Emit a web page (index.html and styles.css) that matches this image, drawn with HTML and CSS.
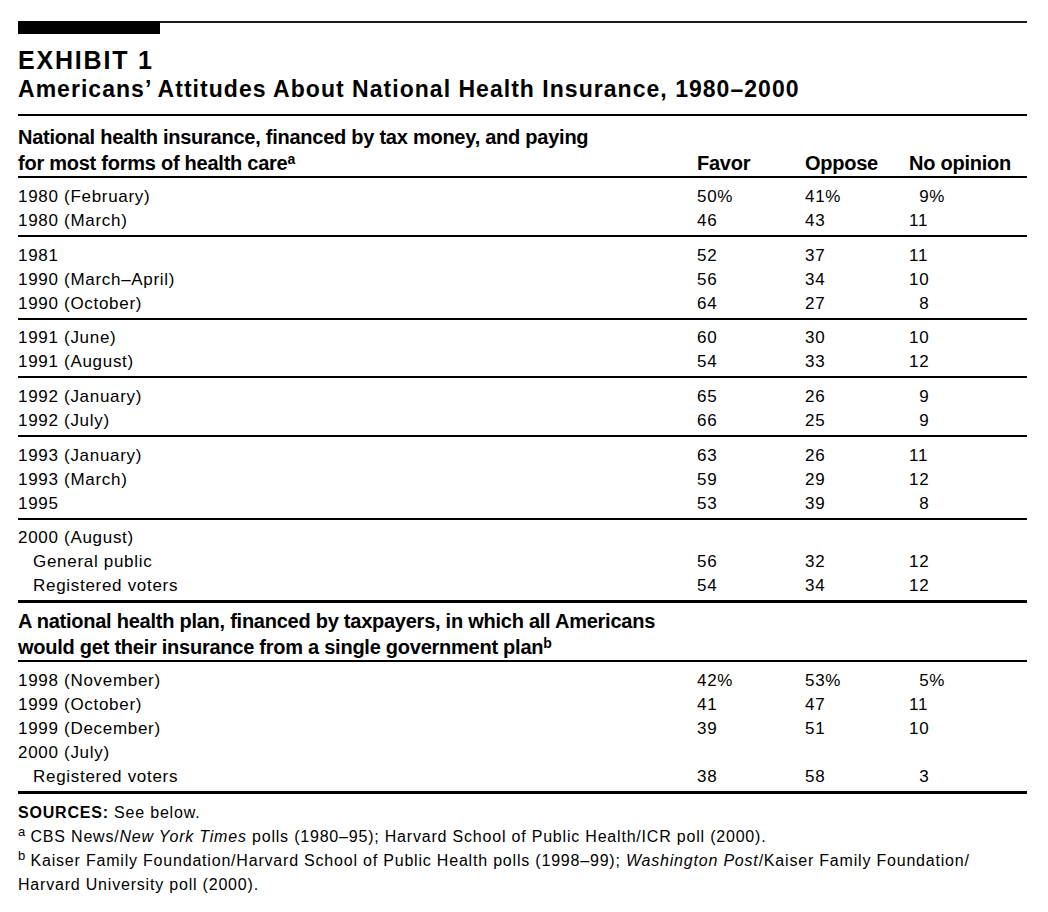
FILE: index.html
```html
<!DOCTYPE html>
<html lang="en">
<head>
<meta charset="utf-8">
<title>Exhibit 1</title>
<link rel="stylesheet" href="styles.css">
</head>
<body>
<div class="exhibit">
  <div class="toprule"><span class="bar"></span><span class="thin"></span></div>
  <h1 class="ex-label">EXHIBIT 1</h1>
  <h2 class="ex-title">Americans’ Attitudes About National Health Insurance, 1980–2000</h2>

  <div class="section">
    <div class="head first row">
      <div class="q">National health insurance, financed by tax money, and paying<br>for most forms of health care<sup>a</sup></div>
      <div>Favor</div><div>Oppose</div><div>No opinion</div>
    </div>
    <div class="group">
      <div class="row"><div>1980 (February)</div><div>50%</div><div>41%</div><div><span class="pad">9%</span></div></div>
      <div class="row"><div>1980 (March)</div><div>46</div><div>43</div><div>11</div></div>
    </div>
    <div class="group">
      <div class="row"><div>1981</div><div>52</div><div>37</div><div>11</div></div>
      <div class="row"><div>1990 (March–April)</div><div>56</div><div>34</div><div>10</div></div>
      <div class="row"><div>1990 (October)</div><div>64</div><div>27</div><div><span class="pad">8</span></div></div>
    </div>
    <div class="group">
      <div class="row"><div>1991 (June)</div><div>60</div><div>30</div><div>10</div></div>
      <div class="row"><div>1991 (August)</div><div>54</div><div>33</div><div>12</div></div>
    </div>
    <div class="group">
      <div class="row"><div>1992 (January)</div><div>65</div><div>26</div><div><span class="pad">9</span></div></div>
      <div class="row"><div>1992 (July)</div><div>66</div><div>25</div><div><span class="pad">9</span></div></div>
    </div>
    <div class="group">
      <div class="row"><div>1993 (January)</div><div>63</div><div>26</div><div>11</div></div>
      <div class="row"><div>1993 (March)</div><div>59</div><div>29</div><div>12</div></div>
      <div class="row"><div>1995</div><div>53</div><div>39</div><div><span class="pad">8</span></div></div>
    </div>
    <div class="group">
      <div class="row"><div>2000 (August)</div><div></div><div></div><div></div></div>
      <div class="row"><div class="ind">General public</div><div>56</div><div>32</div><div>12</div></div>
      <div class="row"><div class="ind">Registered voters</div><div>54</div><div>34</div><div>12</div></div>
    </div>
  </div>

  <div class="section">
    <div class="head second row">
      <div class="q">A national health plan, financed by taxpayers, in which all Americans<br>would get their insurance from a single government plan<sup>b</sup></div>
      <div></div><div></div><div></div>
    </div>
    <div class="group">
      <div class="row"><div>1998 (November)</div><div>42%</div><div>53%</div><div><span class="pad">5%</span></div></div>
      <div class="row"><div>1999 (October)</div><div>41</div><div>47</div><div>11</div></div>
      <div class="row"><div>1999 (December)</div><div>39</div><div>51</div><div>10</div></div>
      <div class="row"><div>2000 (July)</div><div></div><div></div><div></div></div>
      <div class="row"><div class="ind">Registered voters</div><div>38</div><div>58</div><div><span class="pad">3</span></div></div>
    </div>
  </div>

  <div class="notes">
    <p><b>SOURCES:</b> See below.</p>
    <p><sup>a</sup> CBS News/<i>New York Times</i> polls (1980–95); Harvard School of Public Health/ICR poll (2000).</p>
    <p><sup>b</sup> Kaiser Family Foundation/Harvard School of Public Health polls (1998–99); <i>Washington Post</i>/Kaiser Family Foundation/<br>Harvard University poll (2000).</p>
  </div>
</div>
</body>
</html>
```

FILE: styles.css
```css
body {
  margin: 0;
  background: #fff;
  color: #000;
  font-family: "Liberation Sans", Arial, sans-serif;
}

.exhibit {
  width: 1009px;
  margin: 21px 0 0 18px;
}

.toprule {
  display: flex;
  align-items: flex-start;
  height: 13px;
}

.bar {
  width: 142px;
  height: 13px;
  background: #000;
}

.thin {
  flex: 1;
  height: 2px;
  background: #1a1a1a;
}

.ex-label {
  margin: 10.7px 0 0;
  font-size: 25px;
  line-height: 30px;
  font-weight: 700;
  letter-spacing: 1.8px;
}

.ex-title {
  margin: 0 0 11.6px;
  font-size: 23px;
  line-height: 28px;
  font-weight: 700;
  letter-spacing: 1.03px;
}

.section {
  border-bottom: 3px solid #000;
}

.row {
  display: grid;
  grid-template-columns: 679px 108px 104px 1fr;
}

.head {
  align-items: end;
  border-bottom: 2px solid #000;
  font-size: 20px;
  line-height: 26px;
  font-weight: 700;
  letter-spacing: -0.25px;
}

.head.first {
  border-top: 2px solid #000;
  padding: 7.5px 0 0.5px;
}

.head.second {
  padding: 4.5px 0 0.5px;
}

.head sup,
.notes sup {
  line-height: 0;
  vertical-align: 0.45em;
  letter-spacing: 0;
}

.head sup {
  font-size: 14px;
}

.group {
  padding: 6.7px 0 2px;
  border-bottom: 2px solid #000;
  font-size: 17px;
  line-height: 24px;
  letter-spacing: 0.7px;
}

.group:last-child {
  border-bottom: 0;
}

.ind {
  padding-left: 15px;
}

.pad {
  padding-left: 10.2px;
}

.notes {
  padding-top: 7px;
  font-size: 16px;
  line-height: 24px;
  letter-spacing: 0.8px;
}

.notes p {
  margin: 0;
}

.notes sup {
  font-size: 13px;
}
```
